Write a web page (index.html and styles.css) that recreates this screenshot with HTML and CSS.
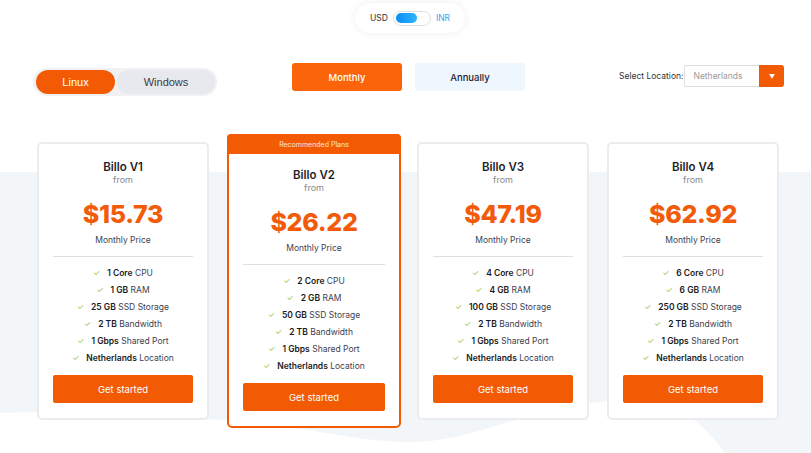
FILE: index.html
```html
<!DOCTYPE html>
<html>
<head>
<meta charset="utf-8">
<link rel="stylesheet" href="styles.css">
</head>
<body>
<div class="page">
  <svg class="bg" width="811" height="453" viewBox="0 0 811 453" preserveAspectRatio="none">
    <path d="M0,172 H811 V453 H725 C705,425 685,408 645,402 C565,392 480,440 420,442 C360,444 300,424 220,420 C130,416 60,410 0,413 Z" fill="#f3f6f9"/>
  </svg>

  <div class="currency-row">
    <div class="currency">
      <span class="cur usd">USD</span>
      <span class="switch"><span class="knob"></span></span>
      <span class="cur inr">INR</span>
    </div>
  </div>

  <div class="controls">
    <div class="os">
      <span class="os-btn active">Linux</span>
      <span class="os-btn">Windows</span>
    </div>
    <div class="period monthly">Monthly</div>
    <div class="period annually">Annually</div>
    <div class="location">
      <span class="loc-label">Select Location:</span>
      <span class="select">Netherlands</span>
      <span class="arrow">▼</span>
    </div>
  </div>

  <div class="cards">
    <div class="card">
      <div class="card-body">
        <div class="name">Billo V1</div>
        <div class="from">from</div>
        <div class="price">$15.73</div>
        <div class="per">Monthly Price</div>
        <ul class="features">
          <li><span class="ck">✓</span><b>1 Core</b> CPU</li>
          <li><span class="ck">✓</span><b>1 GB</b> RAM</li>
          <li><span class="ck">✓</span><b>25 GB</b> SSD Storage</li>
          <li><span class="ck">✓</span><b>2 TB</b> Bandwidth</li>
          <li><span class="ck">✓</span><b>1 Gbps</b> Shared Port</li>
          <li><span class="ck">✓</span><b>Netherlands</b> Location</li>
        </ul>
        <div class="cta">Get started</div>
      </div>
    </div>
    <div class="card featured">
      <div class="ribbon">Recommended Plans</div>
      <div class="card-body">
        <div class="name">Billo V2</div>
        <div class="from">from</div>
        <div class="price">$26.22</div>
        <div class="per">Monthly Price</div>
        <ul class="features">
          <li><span class="ck">✓</span><b>2 Core</b> CPU</li>
          <li><span class="ck">✓</span><b>2 GB</b> RAM</li>
          <li><span class="ck">✓</span><b>50 GB</b> SSD Storage</li>
          <li><span class="ck">✓</span><b>2 TB</b> Bandwidth</li>
          <li><span class="ck">✓</span><b>1 Gbps</b> Shared Port</li>
          <li><span class="ck">✓</span><b>Netherlands</b> Location</li>
        </ul>
        <div class="cta">Get started</div>
      </div>
    </div>
    <div class="card">
      <div class="card-body">
        <div class="name">Billo V3</div>
        <div class="from">from</div>
        <div class="price">$47.19</div>
        <div class="per">Monthly Price</div>
        <ul class="features">
          <li><span class="ck">✓</span><b>4 Core</b> CPU</li>
          <li><span class="ck">✓</span><b>4 GB</b> RAM</li>
          <li><span class="ck">✓</span><b>100 GB</b> SSD Storage</li>
          <li><span class="ck">✓</span><b>2 TB</b> Bandwidth</li>
          <li><span class="ck">✓</span><b>1 Gbps</b> Shared Port</li>
          <li><span class="ck">✓</span><b>Netherlands</b> Location</li>
        </ul>
        <div class="cta">Get started</div>
      </div>
    </div>
    <div class="card">
      <div class="card-body">
        <div class="name">Billo V4</div>
        <div class="from">from</div>
        <div class="price">$62.92</div>
        <div class="per">Monthly Price</div>
        <ul class="features">
          <li><span class="ck">✓</span><b>6 Core</b> CPU</li>
          <li><span class="ck">✓</span><b>6 GB</b> RAM</li>
          <li><span class="ck">✓</span><b>250 GB</b> SSD Storage</li>
          <li><span class="ck">✓</span><b>2 TB</b> Bandwidth</li>
          <li><span class="ck">✓</span><b>1 Gbps</b> Shared Port</li>
          <li><span class="ck">✓</span><b>Netherlands</b> Location</li>
        </ul>
        <div class="cta">Get started</div>
      </div>
    </div>
  </div>
</div>
</body>
</html>
```

FILE: styles.css
```css
* { box-sizing: border-box; }
html, body { margin: 0; padding: 0; background: #fff; }
body {
  font-family: "Inter", "Noto Sans", sans-serif;
  color: #222;
  width: 811px;
  height: 453px;
  overflow: hidden;
}
.page {
  position: relative;
  width: 811px;
  height: 453px;
}
.bg {
  position: absolute;
  left: 0;
  top: 0;
  z-index: 0;
}
.currency-row, .controls, .cards { position: relative; z-index: 1; }

.currency-row {
  display: flex;
  justify-content: center;
  padding-top: 3px;
  padding-left: 9px;
}
.currency {
  width: 110px;
  height: 30px;
  background: #fff;
  border-radius: 15px;
  box-shadow: 0 0 8px rgba(0, 0, 0, 0.07);
  display: flex;
  align-items: center;
  justify-content: center;
  gap: 5px;
}
.cur { font-size: 8.5px; }
.usd { color: #333; }
.inr { color: #3a9ff5; }
.switch {
  width: 38px;
  height: 15px;
  border: 1px solid #dcdfe4;
  border-radius: 8px;
  padding: 1.5px 2px;
  display: flex;
  align-items: center;
}
.knob {
  width: 21px;
  height: 10px;
  border-radius: 5px;
  background: linear-gradient(90deg, #0b8cf5, #2eb6ff);
}

.controls {
  display: flex;
  align-items: flex-start;
  padding-left: 33px;
  margin-top: 30px;
}
.os {
  margin-top: 5px;
  width: 184px;
  height: 28px;
  background: #f1f1f3;
  border-radius: 14px;
  padding: 2px 2px 2px 3px;
  display: flex;
  gap: 2px;
}
.os-btn {
  font-family: "Liberation Sans", Arial, sans-serif;
  font-size: 11px;
  display: flex;
  align-items: center;
  justify-content: center;
  border-radius: 12px;
  background: #e8e9ee;
  color: #3a3a46;
  width: 98px;
}
.os-btn.active {
  width: 79px;
  background: #f25b04;
  color: #fff;
}
.period {
  width: 110px;
  height: 28px;
  border-radius: 3px;
  display: flex;
  align-items: center;
  justify-content: center;
  font-size: 9.5px;
  font-weight: 500;
}
.monthly {
  margin-left: 75px;
  background: #fb640a;
  color: #fff;
}
.annually {
  margin-left: 13px;
  background: #eef6fe;
  color: #1f2433;
}
.location {
  margin-left: 94px;
  margin-top: 2px;
  display: flex;
  align-items: center;
}
.loc-label {
  font-size: 8.5px;
  color: #333;
  margin-right: 1px;
}
.select {
  width: 75px;
  height: 22px;
  border: 1px solid #ddd;
  border-right: none;
  border-radius: 2px 0 0 2px;
  font-size: 8.5px;
  color: #9a9a9a;
  display: flex;
  align-items: center;
  padding-left: 8px;
}
.arrow {
  width: 25px;
  height: 22px;
  background: #f25b04;
  color: #fff;
  font-size: 6px;
  display: flex;
  align-items: center;
  justify-content: center;
  border-radius: 0 3px 3px 0;
}

.cards {
  display: flex;
  align-items: flex-start;
  gap: 18px;
  padding-left: 37px;
  margin-top: 38px;
}
.card {
  width: 172px;
  margin-top: 8px;
  background: #fff;
  border: 2px solid #ebecf0;
  border-radius: 5px;
}
.card.featured {
  width: 174px;
  margin-top: 0;
  margin-right: -2px;
  border-color: #f25b04;
}
.ribbon {
  height: 20px;
  background: #f25b04;
  color: #ffe6d6;
  font-size: 7px;
  display: flex;
  align-items: center;
  justify-content: center;
  margin: -2px -2px 0;
  border-radius: 4px 4px 0 0;
}
.card-body {
  padding: 16px 14px 15px;
  text-align: center;
}
.featured .card-body { padding-top: 14px; padding-bottom: 15px; }
.name {
  font-size: 11.5px;
  font-weight: 600;
  color: #1f1f28;
  line-height: 14px;
}
.from {
  font-size: 9px;
  color: #8a8a8a;
  line-height: 12px;
}
.price {
  margin-top: 13px;
  font-size: 25px;
  font-weight: 800;
  color: #f25b0a;
  line-height: 30px;
  letter-spacing: -0.3px;
}
.per {
  margin-top: 5px;
  font-size: 8.5px;
  color: #3d4150;
  line-height: 12px;
}
.features {
  list-style: none;
  margin: 10px 0 0;
  padding: 8px 0 0;
  border-top: 1px solid #dfe0e4;
}
.features li {
  font-size: 8.5px;
  line-height: 17px;
  color: #3d4150;
  white-space: nowrap;
}
.features b {
  font-weight: 600;
  color: #1a1a22;
}
.ck {
  color: #9cc64a;
  font-size: 8px;
  margin-right: 7px;
  display: inline-block;
}
.cta {
  margin-top: 8px;
  height: 28px;
  background: #f25b04;
  color: #fff;
  border-radius: 2px;
  font-size: 9.5px;
  display: flex;
  align-items: center;
  justify-content: center;
}
```
